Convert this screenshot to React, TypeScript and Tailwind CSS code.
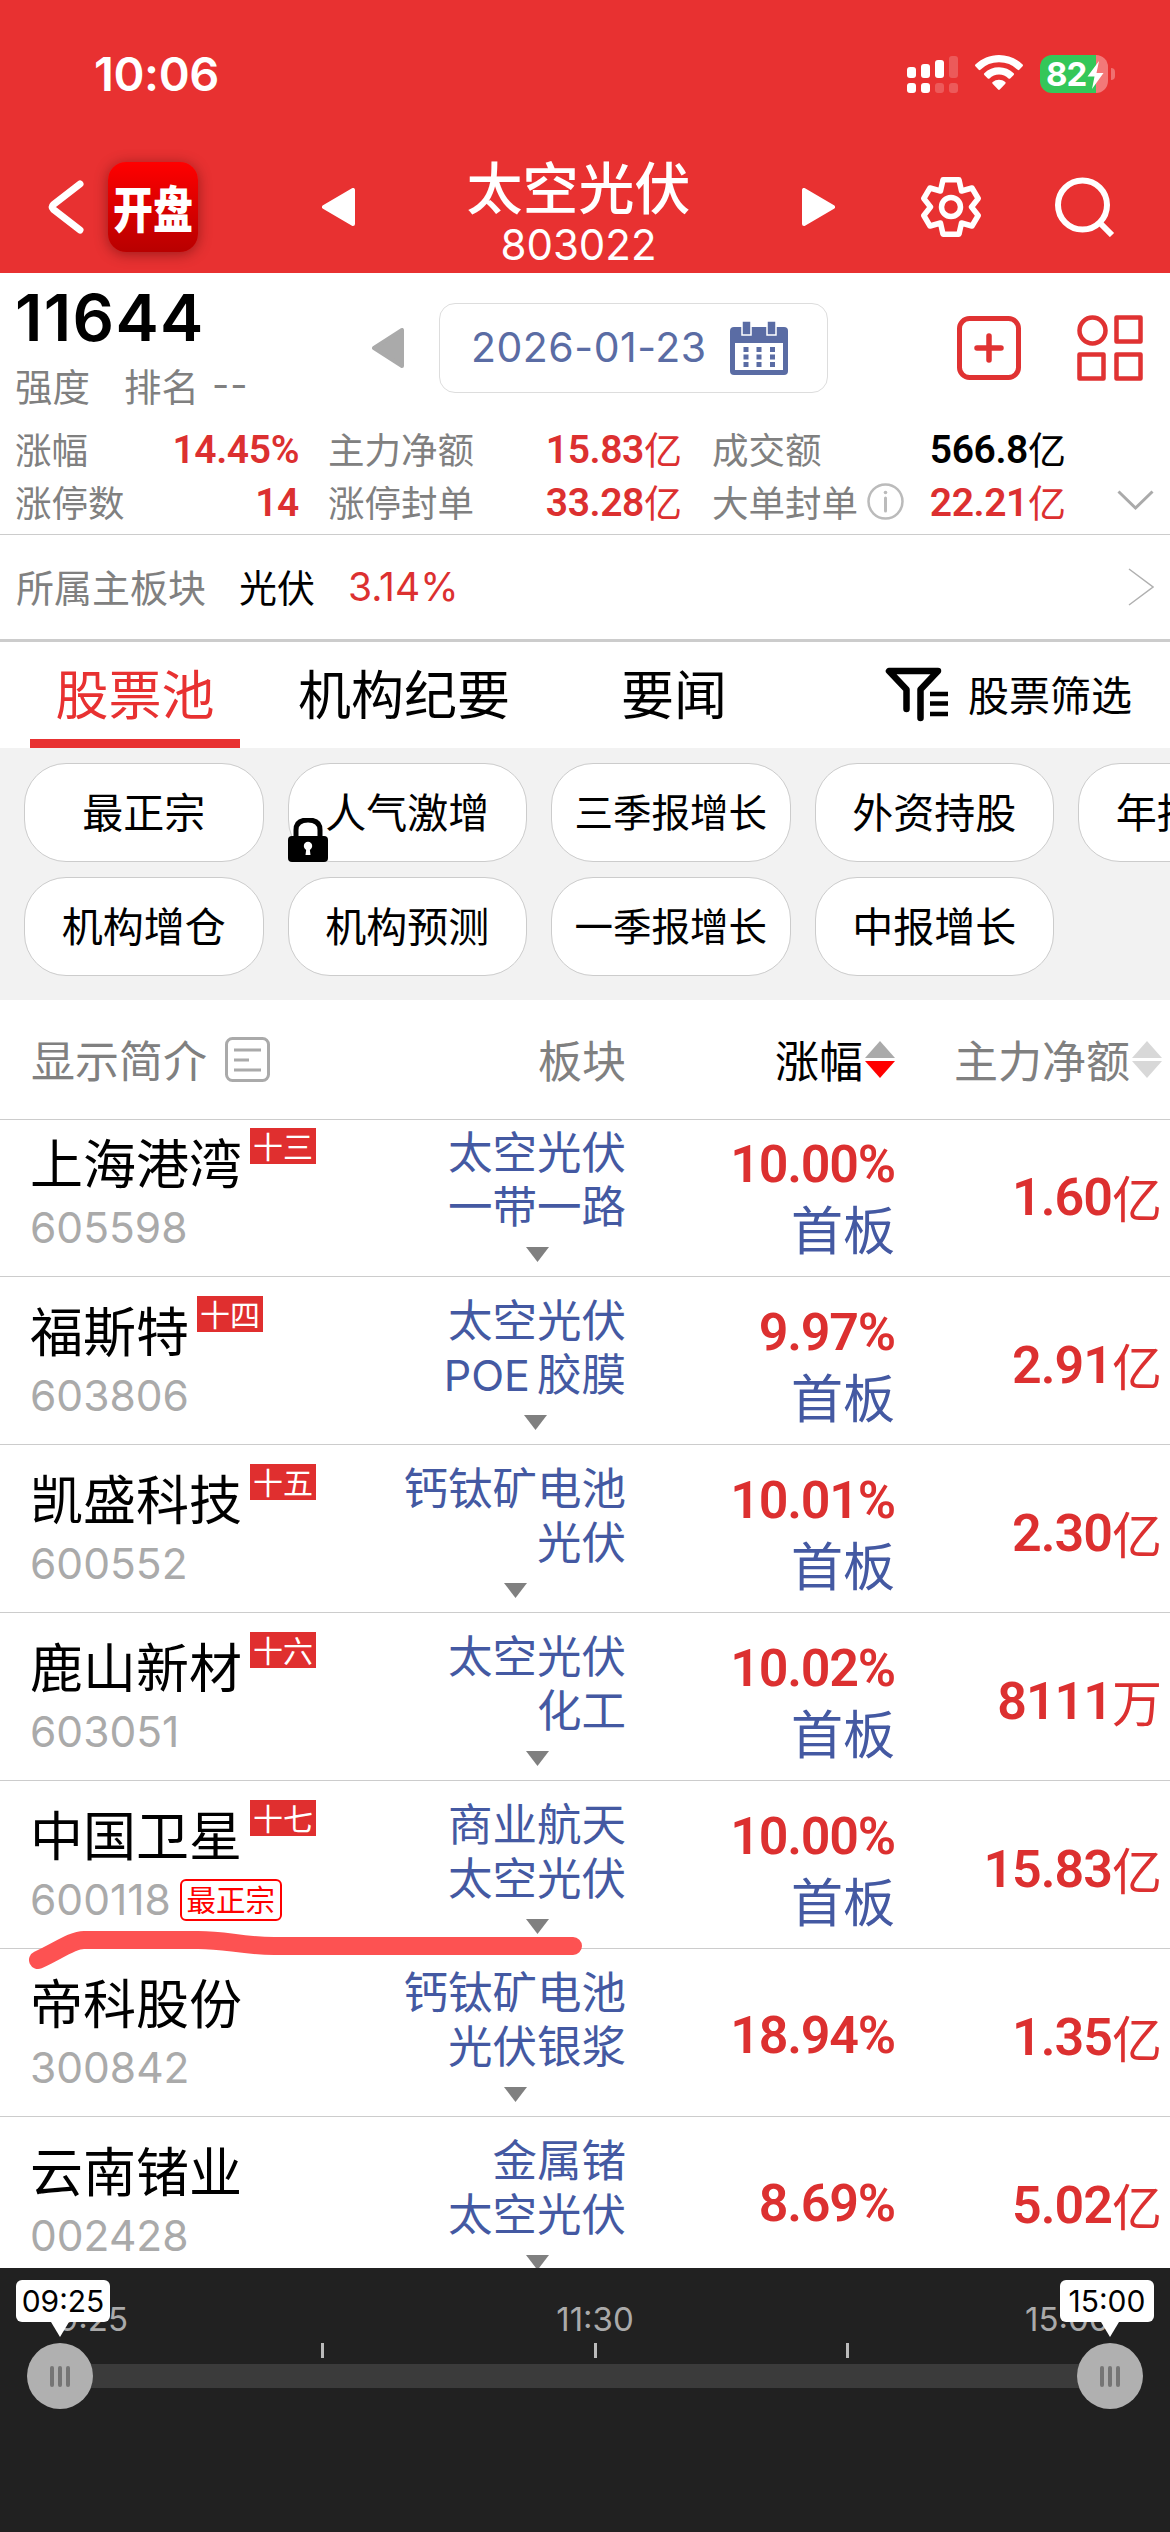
import React from 'react';

type Stock = {
  name: string;
  code: string;
  badge?: string;
  tag?: string;
  sectors: string[];
  change: string;
  board?: string;
  amount: string;
  unit: string;
};

const stocks: Stock[] = [
  { name: '上海港湾', code: '605598', badge: '十三', sectors: ['太空光伏', '一带一路'], change: '10.00%', board: '首板', amount: '1.60', unit: '亿' },
  { name: '福斯特', code: '603806', badge: '十四', sectors: ['太空光伏', 'POE胶膜'], change: '9.97%', board: '首板', amount: '2.91', unit: '亿' },
  { name: '凯盛科技', code: '600552', badge: '十五', sectors: ['钙钛矿电池', '光伏'], change: '10.01%', board: '首板', amount: '2.30', unit: '亿' },
  { name: '鹿山新材', code: '603051', badge: '十六', sectors: ['太空光伏', '化工'], change: '10.02%', board: '首板', amount: '8111', unit: '万' },
  { name: '中国卫星', code: '600118', badge: '十七', tag: '最正宗', sectors: ['商业航天', '太空光伏'], change: '10.00%', board: '首板', amount: '15.83', unit: '亿' },
  { name: '帝科股份', code: '300842', sectors: ['钙钛矿电池', '光伏银浆'], change: '18.94%', amount: '1.35', unit: '亿' },
  { name: '云南锗业', code: '002428', sectors: ['金属锗', '太空光伏'], change: '8.69%', amount: '5.02', unit: '亿' },
];

const filters = [
  [
    { label: '最正宗' },
    { label: '人气激增', locked: true },
    { label: '三季报增长' },
    { label: '外资持股' },
    { label: '年报增长' },
  ],
  [
    { label: '机构增仓' },
    { label: '机构预测' },
    { label: '一季报增长' },
    { label: '中报增长' },
  ],
];

function StatusIcons() {
  return (
    <div className="flex items-start">
      <svg width="52" height="38" viewBox="0 0 52 38" className="mt-[1px]" fill="#fff">
        <rect x="0" y="11" width="9" height="11" rx="3" />
        <rect x="14" y="8" width="9" height="14" rx="3" />
        <rect x="28" y="4" width="9" height="18" rx="3" />
        <rect x="42" y="0" width="9" height="22" rx="3" opacity=".2" />
        <rect x="0" y="27" width="9" height="10" rx="3" />
        <rect x="14" y="27" width="9" height="10" rx="3" />
        <rect x="28" y="27" width="9" height="10" rx="3" opacity=".2" />
        <rect x="42" y="27" width="9" height="10" rx="3" opacity=".2" />
      </svg>
      <svg width="48" height="36" viewBox="0 0 48 36" className="ml-[16px]" fill="#fff">
        <path d="M24 0C33 0 41.500 3.600 47.600 9.500a1.200 1.200 0 0 1 0 1.700l-3.300 3.500a1.200 1.200 0 0 1-1.700 0A27 27 0 0 0 24 7.300 27 27 0 0 0 5.400 14.700a1.200 1.200 0 0 1-1.700 0L.4 11.200a1.200 1.200 0 0 1 0-1.700C6.500 3.600 15 0 24 0Z" />
        <path d="M24 12.300c5.600 0 10.800 2.200 14.700 5.900a1.200 1.200 0 0 1 0 1.700l-3.500 3.500a1.200 1.200 0 0 1-1.700 0A13.800 13.800 0 0 0 24 19.600c-3.600 0-7 1.400-9.500 3.800a1.200 1.200 0 0 1-1.700 0l-3.500-3.500a1.200 1.200 0 0 1 0-1.700A21.300 21.300 0 0 1 24 12.300Z" />
        <path d="M24 24.700c2.300 0 4.500.9 6.200 2.300a1.200 1.200 0 0 1 .1 1.800l-5.500 5.800a1.200 1.200 0 0 1-1.700 0l-5.500-5.800a1.200 1.200 0 0 1 .1-1.800A9.700 9.700 0 0 1 24 24.700Z" />
      </svg>
      <div className="relative ml-[17px] flex h-[38px] w-[68px] items-center overflow-hidden rounded-[12px] bg-gradient-to-r from-[#34c759] from-[82%] to-[#f37878] to-[82%] pl-[6px]">
        <span className="font-['Inter'] text-[33px] leading-none font-bold tracking-[-1px]">82</span>
        <svg width="17" height="28" viewBox="0 0 17 28" className="absolute top-[6px] right-[4px]" fill="#fff">
          <path d="M12 0 0.500 15.500 7.500 15.500 5 28 16.500 12 9.500 12Z" />
        </svg>
      </div>
      <div className="mt-[13px] ml-[3px] h-[12px] w-[4px] rounded-r-full bg-[#f07070]" />
    </div>
  );
}

function Header() {
  return (
    <header className="h-[273px] bg-[#e83131] text-white">
      <div className="flex h-[141px] items-start justify-between pt-[55px] pr-[55px] pl-[94px]">
        <span className="font-['Inter'] text-[47px] leading-[38px] font-semibold tracking-[-0.4px]">10:06</span>
        <StatusIcons />
      </div>
      <div className="flex h-[132px] items-center pl-[48px]">
        <svg width="36" height="54" viewBox="0 0 36 54" fill="none" stroke="#fff" strokeWidth="7" strokeLinecap="round" strokeLinejoin="round">
          <path d="M32 4 5.500 24.500Q3 27 5.500 29.500L32 50" />
        </svg>
        <div className="ml-[24px] flex h-[90px] w-[90px] items-center justify-center rounded-[18px] bg-gradient-to-b from-[#ff0000] to-[#b80000] shadow-[0_2px_14px_rgba(60,0,0,0.45)]">
          <span className="scale-y-125 text-[40px] leading-none font-black">开盘</span>
        </div>
        <svg width="33" height="38" viewBox="0 0 33 38" className="ml-[124px]" fill="#fff" stroke="#fff" strokeWidth="4" strokeLinejoin="round">
          <path d="M31 2 31 36 2 19Z" />
        </svg>
        <div className="flex w-[447px] flex-col items-center pt-[8px]">
          <span className="text-[56px] leading-[60px] font-medium">太空光伏</span>
          <span className="mt-[7px] font-['Inter'] text-[42px] leading-[46px]">803022</span>
        </div>
        <svg width="33" height="38" viewBox="0 0 33 38" fill="#fff" stroke="#fff" strokeWidth="4" strokeLinejoin="round">
          <path d="M2 2 2 36 31 19Z" />
        </svg>
        <svg width="60" height="60" viewBox="0 0 60 60" className="ml-[86px]" fill="none" stroke="#fff" strokeWidth="5.500" strokeLinejoin="round">
          <path d="M22 2.800H38L40.500 14 51 11 57.200 21.500 50.500 30 57.200 38.500 51 49 40.500 46 38 57.200H22L19.500 46 9 49 2.800 38.500 9.500 30 2.800 21.500 9 11 19.500 14Z" />
          <circle cx="30" cy="30" r="9.500" />
        </svg>
        <svg width="60" height="60" viewBox="0 0 60 60" className="ml-[74px]" fill="none" stroke="#fff" strokeWidth="6">
          <circle cx="27.500" cy="28" r="24.500" />
          <path d="M45 46 57 58" />
        </svg>
      </div>
    </header>
  );
}

function CalendarIcon() {
  return (
    <svg width="58" height="54" viewBox="0 0 58 54" fill="#5a6ca4">
      <rect x="0" y="6" width="58" height="48" rx="4" />
      <rect x="5" y="22" width="48" height="27" fill="#fff" />
      <path d="M12 0h9v14h-9zM37 0h9v14h-9z" stroke="#fff" strokeWidth="1.500" />
      {[26, 33.5, 41].map((y) => (
        <path key={y} d={`M13.500 ${y}h5v5h-5zM26.500 ${y}h5v5h-5zM40 ${y}h5v5h-5z`} />
      ))}
    </svg>
  );
}

function Value({ num, unit, black }: { num: string; unit?: string; black?: boolean }) {
  return (
    <span className={`flex h-[53px] items-start justify-end leading-[53px] ${black ? 'text-black' : 'text-[#dc3030]'}`}>
      <span className="pt-[2px] font-['Roboto'] text-[39px] font-semibold tracking-[-0.4px]">{num}</span>
      {unit && <span className="text-[38px] leading-[52px]">{unit}</span>}
    </span>
  );
}

function Summary() {
  return (
    <section className="h-[262px] border-b border-[#ccc]">
      <div className="flex h-[149px] items-start">
        <div className="w-[372px] pt-[12px] pl-[15px]">
          <div className="font-['Inter'] text-[65px] leading-[66px] font-semibold tracking-[1.3px]">11644</div>
          <div className="mt-[9px] flex text-[37.500px] leading-[50px] text-[#808080]">
            <span>强度</span>
            <span className="ml-[34px]">排名</span>
            <span className="ml-[13px] font-['Inter'] tracking-[1px]">--</span>
          </div>
        </div>
        <svg width="32" height="40" viewBox="0 0 32 40" className="mt-[55px]" fill="#aaa" stroke="#aaa" strokeWidth="4" strokeLinejoin="round">
          <path d="M30 2 30 38 2 20Z" />
        </svg>
        <div className="mt-[30px] ml-[35px] flex h-[90px] w-[389px] items-center rounded-[16px] border-[1.500px] border-[#ddd] pl-[31px]">
          <span className="w-[259px] font-['Inter'] text-[41px] tracking-[0.5px] whitespace-nowrap text-[#5a6ca4]">2026-01-23</span>
          <CalendarIcon />
        </div>
        <svg width="64" height="64" viewBox="0 0 64 64" className="mt-[43px] ml-[129px]" fill="none" stroke="#e03232" strokeWidth="5">
          <rect x="2.500" y="2.500" width="59" height="59" rx="10" />
          <path d="M32 20v24M20 32h24" strokeWidth="5.500" strokeLinecap="round" />
        </svg>
        <svg width="66" height="66" viewBox="0 0 66 66" className="mt-[42px] ml-[56px]" fill="none" stroke="#e03232" strokeWidth="4.500" strokeLinejoin="round">
          <circle cx="15.500" cy="15.500" r="13" />
          <rect x="39.500" y="2.500" width="24" height="24" />
          <rect x="2.500" y="39.500" width="24" height="24" />
          <rect x="39.500" y="39.500" width="24" height="24" />
        </svg>
      </div>
      <div className="flex pl-[15px] text-[36.500px] leading-[53px] text-[#808080]">
        <div className="w-[110px]">
          <div>涨幅</div>
          <div>涨停数</div>
        </div>
        <div className="w-[174px]">
          <Value num="14.45%" />
          <Value num="14" />
        </div>
        <div className="ml-[29px] w-[160px]">
          <div>主力净额</div>
          <div>涨停封单</div>
        </div>
        <div className="w-[194px]">
          <Value num="15.83" unit="亿" />
          <Value num="33.28" unit="亿" />
        </div>
        <div className="ml-[30px] w-[200px]">
          <div>成交额</div>
          <div className="flex items-center">
            大单封单
            <svg width="37" height="37" viewBox="0 0 37 37" className="ml-[9px]" fill="none" stroke="#bbb" strokeWidth="2.500">
              <circle cx="18.500" cy="18.500" r="17" />
              <path d="M18.500 15v13" strokeWidth="3" strokeLinecap="round" />
              <circle cx="18.500" cy="9.500" r="1.800" fill="#bbb" stroke="none" />
            </svg>
          </div>
        </div>
        <div className="w-[154px]">
          <Value num="566.8" unit="亿" black />
          <Value num="22.21" unit="亿" />
        </div>
        <svg width="37" height="22" viewBox="0 0 37 22" className="mt-[68px] ml-[51px]" fill="none" stroke="#aaa" strokeWidth="3">
          <path d="M1.500 1.500 18.500 18 35.500 1.500" />
        </svg>
      </div>
    </section>
  );
}

function ParentSector() {
  return (
    <div className="flex h-[107px] items-center border-b-[3px] border-[#ccc] pr-[16px] pl-[16px] text-[38px]">
      <span className="pb-[4px] text-[#808080]">所属主板块</span>
      <span className="ml-[33px] pb-[4px]">光伏</span>
      <span className="ml-[33px] font-['Inter'] text-[39px] text-[#dc3030]">3.14%</span>
      <svg width="26" height="38" viewBox="0 0 26 38" className="ml-auto" fill="none" stroke="#b0b0b0" strokeWidth="1.500">
        <path d="M1 1 25 19 1 37" />
      </svg>
    </div>
  );
}

function Tabs() {
  return (
    <nav className="flex h-[106px] text-[53px] leading-[100px]">
      <div className="ml-[30px] h-full w-[210px] border-b-[9px] border-[#e83131] text-center text-[#e83131]">股票池</div>
      <div className="ml-[58px]">机构纪要</div>
      <div className="ml-[111px]">要闻</div>
      <div className="ml-auto flex h-[102px] items-center pr-[38px] text-[41px]">
        <svg width="64" height="56" viewBox="0 0 64 56" className="mt-[3px] mr-[19px]" fill="none" stroke="#000" strokeWidth="6.500" strokeLinecap="round" strokeLinejoin="round">
          <path d="M21.500 42V22.500L4 4H53L35.500 22.500V51" />
          <path d="M45 27H63M45 36.500H63M45 47H63" strokeWidth="4.500" strokeLinecap="butt" />
        </svg>
        股票筛选
      </div>
    </nav>
  );
}

function LockIcon() {
  return (
    <svg width="40" height="44" viewBox="0 0 40 44" className="absolute -bottom-px -left-px">
      <path d="M8 20V12Q8 2 20 2T32 12V20" fill="none" stroke="#000" strokeWidth="5" />
      <rect x="0" y="18" width="40" height="26" rx="4" />
      <circle cx="20" cy="28" r="4.200" fill="#fff" />
      <path d="M18.500 29h3l1 8h-5z" fill="#fff" />
    </svg>
  );
}

function FilterPills() {
  return (
    <section className="flex h-[252px] flex-col gap-[15px] overflow-hidden bg-[#f2f2f2] pt-[15px] pl-[24px]">
      {filters.map((row, i) => (
        <div key={i} className="flex gap-[24px]">
          {row.map((f) => (
            <div
              key={f.label}
              className={`relative flex h-[99px] w-[239.500px] shrink-0 items-center justify-center rounded-[42px] border border-[#ccc] bg-white pb-[3px] ${
                f.label.length > 4 ? 'text-[38.500px]' : 'text-[41px]'
              }`}
            >
              {f.label}
              {'locked' in f && f.locked && <LockIcon />}
            </div>
          ))}
        </div>
      ))}
    </section>
  );
}

function SortArrows({ up, down }: { up: string; down: string }) {
  return (
    <svg width="30" height="37" viewBox="0 0 30 37" className="mt-[2px] ml-[2px]">
      <path d="M15 0 30 17H0Z" fill={up} />
      <path d="M15 37 30 20H0Z" fill={down} />
    </svg>
  );
}

function TableHead() {
  return (
    <div className="flex h-[120px] items-center border-b border-[#ccc] pb-[2px] pl-[31px] text-[44px] text-[#808080]">
      <span>显示简介</span>
      <svg width="45" height="45" viewBox="0 0 45 45" className="mt-[2px] ml-[18px]" fill="none" stroke="#aaa" strokeWidth="3">
        <rect x="1.500" y="1.500" width="42" height="42" rx="6" />
        <path d="M9 13H36M9 23H24M9 33H36" />
      </svg>
      <span className="w-[356px] text-right">板块</span>
      <div className="flex w-[269px] items-center justify-end text-black">
        涨幅
        <SortArrows up="#aaa" down="#ff0000" />
      </div>
      <div className="flex w-[267px] items-center justify-end">
        主力净额
        <SortArrows up="#d8d8d8" down="#d8d8d8" />
      </div>
    </div>
  );
}

// Latin prefixes ("POE胶膜") get their own face and a small gap before the Chinese part
function SectorName({ name }: { name: string }) {
  const latin = name.match(/^[A-Z]+/)?.[0] ?? '';
  return (
    <div className="h-[54px]">
      {latin && <span className="mr-[7px] font-['Inter'] text-[43px]">{latin}</span>}
      {name.slice(latin.length)}
    </div>
  );
}

function StockRow({ stock }: { stock: Stock }) {
  return (
    <div className="flex h-[168px] border-b border-[#ccc]">
      <div className="w-[346px] pl-[30px]">
        <div className="flex h-[86px] items-start">
          <span className="pt-[20px] text-[53px] leading-[64px]">{stock.name}</span>
          {stock.badge && (
            <span className="mt-[19px] ml-[8px] flex h-[36px] w-[66px] items-center justify-center bg-[#e02f2f] pb-[2px] text-[30px] leading-none text-white">
              {stock.badge}
            </span>
          )}
        </div>
        <div className="flex h-[66px] items-center">
          <span className="font-['Inter'] text-[42.500px] text-[#aaa]">{stock.code}</span>
          {stock.tag && (
            <span className="ml-[9px] flex h-[42px] w-[102px] items-center justify-center rounded-[6px] border-2 border-[#f00] pb-[2px] text-[29.500px] leading-none text-[#f00]">
              {stock.tag}
            </span>
          )}
        </div>
      </div>
      <div className="flex w-[280px] justify-end">
        <div className="flex flex-col items-center pt-[14px]">
          <div className="text-right text-[44.500px] leading-[54px] text-[#4459a2]">
            {stock.sectors.map((s) => (
              <SectorName key={s} name={s} />
            ))}
          </div>
          <svg width="23" height="15" viewBox="0 0 23 15" className="mt-[16px] ml-[2px]">
            <path d="M0 0H23L11.500 15Z" fill="#808080" />
          </svg>
        </div>
      </div>
      <div className="flex w-[269px] flex-col items-end justify-center pt-[4px]">
        <span className="pt-[2px] font-['Roboto'] text-[52px] leading-[66px] font-semibold tracking-[-1.2px] text-[#dc3030]">
          {stock.change}
        </span>
        {stock.board && <span className="h-[62px] text-[52px] leading-[60px] text-[#4459a2]">{stock.board}</span>}
      </div>
      <div className="flex w-[267px] items-start justify-end pt-[59px] leading-[60px] text-[#dc3030]">
        <span className="font-['Roboto'] text-[52px] font-semibold tracking-[-1px]">{stock.amount}</span>
        <span className="text-[50px] leading-[57px]">{stock.unit}</span>
      </div>
    </div>
  );
}

function Marker() {
  return (
    <svg width="560" height="50" viewBox="0 0 560 50" className="absolute top-[810px] left-[24px]" fill="none" stroke="#fd5252" strokeWidth="18" strokeLinecap="round">
      <path d="M14 30C34 21 48 10 60 10H170C200 9 215 16 250 16H549" />
    </svg>
  );
}

function Handle({ time, className }: { time: string; className: string }) {
  return (
    <div className={`absolute top-[12px] flex w-[94px] flex-col items-center ${className}`}>
      <div className="flex h-[42px] w-full items-center justify-center rounded-[6px] bg-white font-['Inter'] text-[30px] leading-none text-black">
        {time}
      </div>
      <svg width="18" height="15" viewBox="0 0 18 15">
        <path d="M0 0H18L9 15Z" fill="#fff" />
      </svg>
      <div className="mt-[6px] flex h-[66px] w-[66px] items-center justify-center gap-[4px] rounded-full bg-[#b0b0b0]">
        <i className="h-[21px] w-[4px] rounded-full bg-[#757575]" />
        <i className="h-[21px] w-[4px] rounded-full bg-[#757575]" />
        <i className="h-[21px] w-[4px] rounded-full bg-[#757575]" />
      </div>
    </div>
  );
}

function Timeline() {
  return (
    <footer className="relative h-[264px] bg-[#212121] pt-[31px]">
      <div className="flex font-['Inter'] text-[33px] leading-[40px] text-[#aaa]">
        <span className="w-[128px] text-right">9:25</span>
        <span className="w-[934px] text-center">11:30</span>
        <span className="-ml-[37px]">15:00</span>
      </div>
      <div className="mt-[4px] flex h-[15px] pl-[321px]">
        <i className="w-[3px] bg-[#bbb]" />
        <i className="ml-[270px] w-[3px] bg-[#bbb]" />
        <i className="ml-[249px] w-[3px] bg-[#bbb]" />
      </div>
      <div className="mx-[60px] mt-[6px] h-[24px] bg-[#3b3b3b]" />
      <Handle time="09:25" className="left-[16px] [&>svg]:-ml-[6px] [&>div:last-child]:-ml-[6px]" />
      <Handle time="15:00" className="left-[1060px] [&>svg]:ml-[6px] [&>div:last-child]:ml-[6px]" />
    </footer>
  );
}

export default function App() {
  return (
    <div lang="zh-CN" className="h-[2532px] w-[1170px] overflow-hidden bg-white font-['Noto_Sans_CJK_SC',sans-serif] text-black">
      <Header />
      <Summary />
      <ParentSector />
      <Tabs />
      <FilterPills />
      <TableHead />
      <div className="relative h-[1148px] overflow-hidden">
        <div className="-mt-[11px]">
          {stocks.map((s) => (
            <StockRow key={s.code} stock={s} />
          ))}
        </div>
        <Marker />
      </div>
      <Timeline />
    </div>
  );
}
